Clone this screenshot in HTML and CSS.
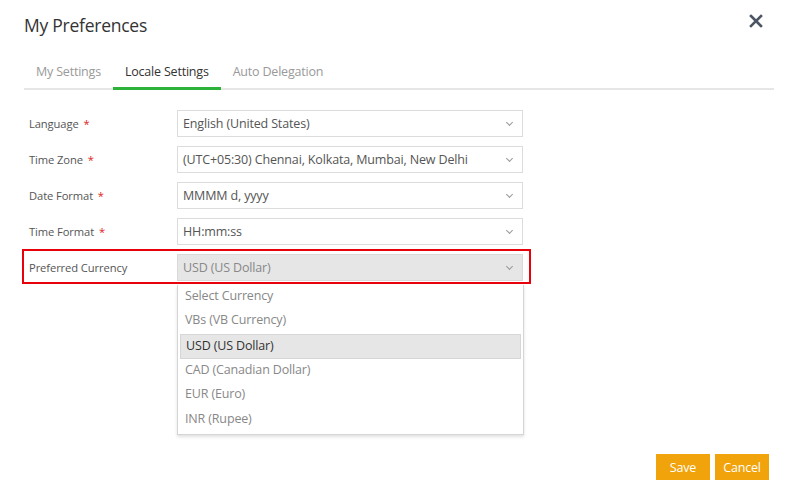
FILE: index.html
```html
<!DOCTYPE html>
<html lang="en">
<head>
  <meta charset="UTF-8">
  <title>My Preferences</title>
  <link rel="stylesheet" href="styles.css">
</head>
<body>
  <div class="dialog">
    <div class="dialog-header">
      <h1>My Preferences</h1>
      <button class="close" title="Close">
        <svg width="14" height="14" viewBox="0 0 14 14"><path d="M2 2L12 12M12 2L2 12" stroke="#4b5563" stroke-width="2.6" stroke-linecap="square"/></svg>
      </button>
    </div>

    <div class="tabs">
      <div class="tab">My Settings</div>
      <div class="tab active">Locale Settings</div>
      <div class="tab">Auto Delegation</div>
    </div>

    <div class="form">
      <div class="row">
        <label>Language <span class="req">*</span></label>
        <div class="select">English (United States)<i class="caret"></i></div>
      </div>
      <div class="row">
        <label>Time Zone <span class="req">*</span></label>
        <div class="select">(UTC+05:30) Chennai, Kolkata, Mumbai, New Delhi<i class="caret"></i></div>
      </div>
      <div class="row">
        <label>Date Format <span class="req">*</span></label>
        <div class="select">MMMM d, yyyy<i class="caret"></i></div>
      </div>
      <div class="row">
        <label>Time Format <span class="req">*</span></label>
        <div class="select">HH:mm:ss<i class="caret"></i></div>
      </div>
      <div class="row highlight">
        <label>Preferred Currency</label>
        <div class="select open">USD (US Dollar)<i class="caret"></i>
          <ul class="options">
            <li>Select Currency</li>
            <li>VBs (VB Currency)</li>
            <li class="selected">USD (US Dollar)</li>
            <li>CAD (Canadian Dollar)</li>
            <li>EUR (Euro)</li>
            <li>INR (Rupee)</li>
          </ul>
        </div>
      </div>
    </div>

    <div class="footer">
      <button class="btn">Save</button>
      <button class="btn">Cancel</button>
    </div>
  </div>
</body>
</html>
```

FILE: styles.css
```css
* {
  box-sizing: border-box;
}
body {
  margin: 0;
  background: #fff;
  font-family: "Open Sans", "Noto Sans", sans-serif;
  color: #333;
}
.dialog {
  width: 800px;
  height: 498px;
  padding: 0 26px 0 24px;
  display: flex;
  flex-direction: column;
}
.dialog-header {
  display: flex;
  justify-content: space-between;
  align-items: flex-start;
  height: 54px;
  padding-top: 13px;
}
.dialog-header h1 {
  margin: 0;
  font-size: 17.5px;
  font-weight: 400;
  color: #333;
  letter-spacing: -0.25px;
}
.close {
  border: none;
  background: none;
  padding: 0;
  margin: 1px 11px 0 0;
  width: 14px;
  height: 14px;
  cursor: pointer;
}
.close svg {
  display: block;
}
.tabs {
  display: flex;
  border-bottom: 2px solid #e6e6e6;
}
.tab {
  font-size: 12.5px;
  color: #999;
  padding: 2px 12px 0;
  height: 36px;
  line-height: 31px;
  margin-bottom: -2px;
  border-bottom: 3px solid transparent;
  letter-spacing: -0.2px;
}
.tab.active {
  color: #333;
  border-bottom-color: #2db239;
}
.form {
  padding-top: 15px;
}
.row {
  display: flex;
  align-items: center;
  width: 499px;
  height: 36px;
  position: relative;
}
.row label {
  width: 153px;
  padding-left: 5px;
  font-size: 11.2px;
  color: #555;
  letter-spacing: -0.1px;
}
.req {
  color: #e02424;
  margin-left: 2px;
}
.select {
  position: relative;
  width: 346px;
  height: 27px;
  border: 1px solid #dcdcdc;
  padding: 0 5px;
  font-size: 12.5px;
  line-height: 25px;
  color: #555;
  letter-spacing: -0.15px;
}
.caret {
  position: absolute;
  right: 10px;
  top: 9px;
  width: 5px;
  height: 5px;
  border-right: 1px solid #999;
  border-bottom: 1px solid #999;
  transform: rotate(45deg);
}
.select.open {
  background: #e6e6e6;
  border-color: #d9d9d9;
  color: #888;
}
.row.highlight::before {
  content: "";
  position: absolute;
  left: -2px;
  right: -8px;
  top: 0;
  bottom: 1px;
  border: 2px solid #e8000b;
  pointer-events: none;
}
.options {
  position: absolute;
  top: 30px;
  left: -1px;
  width: 347px;
  margin: 0;
  padding: 0 2px 1px;
  list-style: none;
  background: #fff;
  border: 1px solid #d5d5d5;
  border-top: none;
  box-shadow: 0 2px 3px rgba(0, 0, 0, 0.12);
  color: #888;
  z-index: 2;
}
.options li {
  height: 24.7px;
  line-height: 22px;
  padding-left: 5px;
}
.options li.selected {
  background: #e6e6e6;
  color: #333;
  border: 1px solid #d6d6d6;
  line-height: 21px;
}
.footer {
  margin-top: auto;
  display: flex;
  justify-content: flex-end;
  gap: 5px;
  padding-bottom: 18px;
  padding-right: 5px;
}
.btn {
  background: #f0a30a;
  border: none;
  color: #fff;
  font-family: inherit;
  font-size: 12.5px;
  letter-spacing: -0.2px;
  height: 26px;
  min-width: 54px;
  padding: 0 8px;
  cursor: pointer;
}
```
